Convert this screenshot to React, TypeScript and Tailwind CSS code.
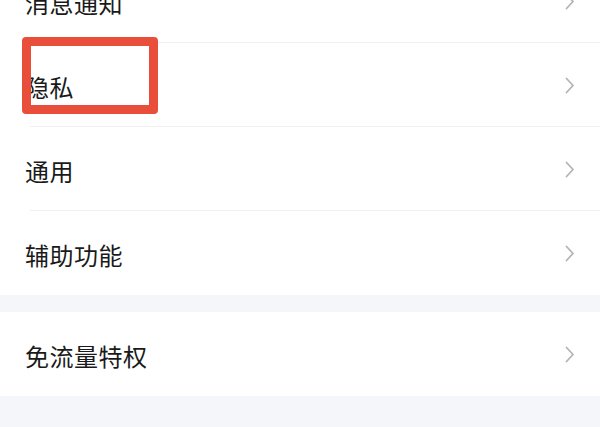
import React from 'react'

interface Row {
  label: string
  highlight?: boolean
}

const groupOne: Row[] = [
  { label: '消息通知' },
  { label: '隐私', highlight: true },
  { label: '通用' },
  { label: '辅助功能' },
]

const groupTwo: Row[] = [{ label: '免流量特权' }]

const Chevron = () => (
  <svg width="10" height="17" viewBox="0 0 10 17" fill="none" className="mr-[25px]">
    <path d="M1.5 1.5 L8 8.5 L1.5 15.5" stroke="#b3b3b3" strokeWidth="1.8" strokeLinecap="round" strokeLinejoin="round" />
  </svg>
)

const SettingRow = ({ row, last }: { row: Row; last: boolean }) => (
  <div className="relative h-[84px] flex items-center justify-between pl-[25px]">
    <span className="text-[24px] leading-none tracking-[0.5px] text-[#1a1a1a] mt-[3px]">{row.label}</span>
    <Chevron />
    {row.highlight && (
      <div className="absolute left-[22px] top-[-6px] w-[136px] h-[77px] border-[9px] border-[#e84e3a] rounded-[4px]" />
    )}
    {!last && <div className="absolute left-[30px] right-0 bottom-0 h-px bg-[#f0f0f2]" />}
  </div>
)

export default function App() {
  return (
    <div
      className="w-[600px] h-[427px] overflow-hidden bg-[#f5f6f9]"
      style={{ fontFamily: '"Noto Sans CJK SC", "Noto Sans", sans-serif' }}
    >
      <div className="bg-white -mt-[41px]">
        {groupOne.map((row, i) => (
          <SettingRow key={row.label} row={row} last={i === groupOne.length - 1} />
        ))}
      </div>
      <div className="h-[17px]" />
      <div className="bg-white">
        {groupTwo.map((row, i) => (
          <SettingRow key={row.label} row={row} last={i === groupTwo.length - 1} />
        ))}
      </div>
    </div>
  )
}
